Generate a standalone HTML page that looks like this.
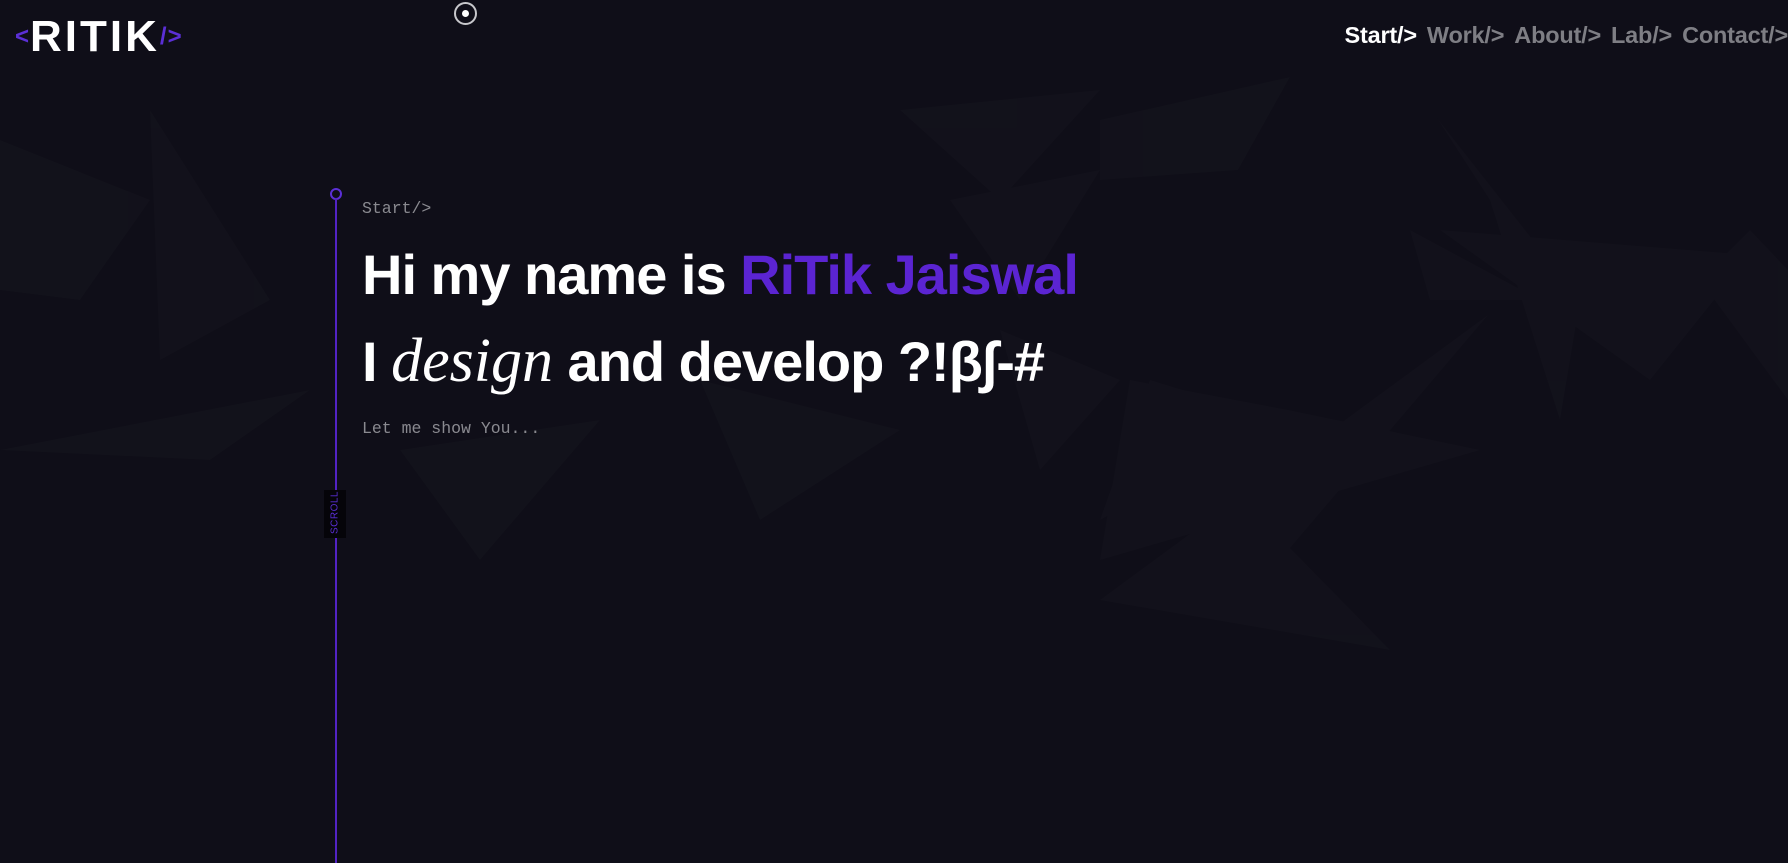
<!DOCTYPE html>
<html><head><meta charset="utf-8"><style>
html,body{margin:0;padding:0;width:1788px;height:863px;overflow:hidden;background:#0f0e18;}
body{position:relative;font-family:"Liberation Sans",sans-serif;}
svg.bg{position:absolute;left:0;top:0;}
.logo{position:absolute;left:15px;top:12px;font-weight:bold;font-size:44px;color:#fff;letter-spacing:3px;}
.logo .p{color:#5b2fd6;font-size:24px;vertical-align:7px;letter-spacing:1px;}
.nav{position:absolute;right:0;top:22px;font-weight:bold;font-size:23.5px;color:#7e7e84;white-space:nowrap;letter-spacing:-0.2px;}
.nav span{margin-left:10px;}
.nav .a{color:#fff;}
.cur{position:absolute;left:454px;top:2px;width:19px;height:19px;border:2px solid #c8c8cc;border-radius:50%;}
.cur:after{content:"";position:absolute;left:6px;top:6px;width:7px;height:7px;border-radius:50%;background:#fff;}
.line{position:absolute;left:335px;top:198px;width:2px;height:700px;background:#5223c4;}
.dot{position:absolute;left:330px;top:188px;width:8px;height:8px;border:2px solid #5b2fd6;border-radius:50%;}
.scroll{position:absolute;left:324px;top:490px;width:22px;height:48px;background:#050409;}
.scroll div{position:absolute;left:-13px;top:17px;transform:rotate(-90deg);font-size:10px;color:#5b2fd6;width:48px;text-align:center;letter-spacing:0.5px;}
.mono{position:absolute;left:362px;font-family:"Liberation Mono",monospace;font-size:16.5px;color:#8a8a90;}
h1{position:absolute;left:362px;margin:0;font-weight:bold;font-size:56px;color:#fff;white-space:nowrap;letter-spacing:-1px;line-height:1;}
h1 .v{color:#5b24d2;}
h1 i{font-family:"Liberation Serif",serif;font-weight:normal;font-size:62px;letter-spacing:0;}
</style></head><body>
<svg class="bg" width="1788" height="863" viewBox="0 0 1788 863">
<g fill="#1a1922" opacity="0.35">
<polygon points="1290,77 1100,120 1100,180 1238,170"/>
<polygon points="1437,118 1580,300 1560,420 1490,200"/>
<polygon points="1440,230 1750,255 1650,380"/>
<polygon points="1410,230 1540,300 1430,300"/>
<polygon points="1288,410 1480,450 1100,560 1130,380"/>
<polygon points="1100,600 1488,315 1290,548 1390,650"/>
<polygon points="1750,230 1788,270 1788,400 1700,280"/>
<polygon points="150,110 270,300 160,360"/>
<polygon points="0,140 150,200 80,300 0,290"/>
<polygon points="0,450 310,390 210,460"/>
<polygon points="900,110 1100,90 1000,200"/>
<polygon points="1150,380 1280,420 1100,520"/>
<polygon points="700,380 900,430 760,520"/>
<polygon points="400,450 600,420 480,560"/>
<polygon points="950,200 1100,170 1020,300"/>
<polygon points="1000,330 1120,380 1040,470"/>
</g>
</svg>
<div class="logo"><span class="p">&lt;</span>RITIK<span class="p">/&gt;</span></div>
<div class="cur"></div>
<div class="nav"><span class="a">Start/&gt;</span><span>Work/&gt;</span><span>About/&gt;</span><span>Lab/&gt;</span><span>Contact/&gt;</span></div>
<div class="dot"></div>
<div class="line"></div>
<div class="scroll"><div>SCROLL</div></div>
<div class="mono" style="top:199px">Start/&gt;</div>
<h1 style="top:247px">Hi my name is <span class="v">RiTik Jaiswal</span></h1>
<h1 style="top:330px">I <i>design</i> and develop ?!β∫-#</h1>
<div class="mono" style="top:419px">Let me show You...</div>
</body></html>
